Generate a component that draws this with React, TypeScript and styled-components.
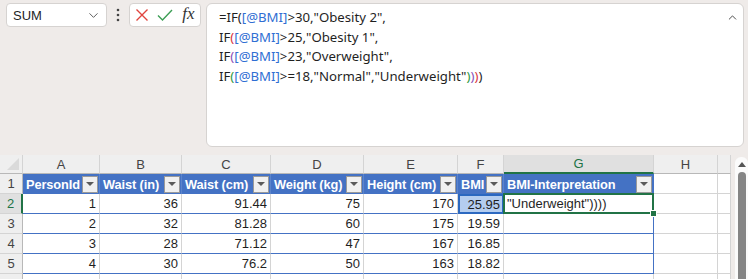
import { Fragment } from "react";
import styled, { createGlobalStyle } from "styled-components";
import { ChevronDown, ChevronUp } from "lucide-react";

const GlobalStyle = createGlobalStyle`
  body {
    margin: 0;
    background-color: #efebe9;
    font-family: "Liberation Sans", Arial, sans-serif;
    overflow: hidden;
  }
`;

const Page = styled.div`
  width: 748px;
  height: 279px;
  overflow: hidden;
`;

const Top = styled.div`
  display: flex;
  align-items: flex-start;
  padding: 3px 4px 0 6px;
  height: 152px;
`;

const NameBox = styled.div`
  box-sizing: border-box;
  width: 101px;
  height: 24px;
  display: flex;
  align-items: center;
  justify-content: space-between;
  padding: 0 5px 0 6px;
  background-color: #ffffff;
  border: 1px solid #d6d3d1;
  border-radius: 4px;
  font-size: 13px;
  color: #1f1f1f;
  & svg {
    color: #555555;
  }
`;

const Dots = styled.div`
  width: 22px;
  height: 24px;
  display: flex;
  align-items: center;
  justify-content: center;
`;

const ButtonBox = styled.div`
  box-sizing: border-box;
  width: 72px;
  height: 24px;
  display: flex;
  background-color: #ffffff;
  border: 1px solid #d6d3d1;
  border-radius: 4px;
`;

const IconSlot = styled.div`
  flex: 1;
  display: flex;
  align-items: center;
  justify-content: center;
`;

const Fx = styled.span`
  font-family: "Liberation Serif", "Times New Roman", serif;
  font-style: italic;
  font-size: 17px;
  color: #333333;
  margin-top: -2px;
`;

const FormulaBar = styled.div`
  box-sizing: border-box;
  flex: 1;
  height: 144px;
  margin-left: 5px;
  display: flex;
  align-items: flex-start;
  padding: 4px 4px 0 12px;
  background-color: #ffffff;
  border: 1px solid #d6d3d1;
  border-radius: 6px;
  & svg {
    color: #333333;
    margin-top: 3px;
  }
`;

const FormulaText = styled.div`
  flex: 1;
  font-family: "Noto Sans", "Liberation Sans", sans-serif;
  font-size: 13.2px;
  line-height: 19.7px;
  color: #1f1f1f;
  white-space: pre;
`;

const Tok = styled.span<{ $c?: string }>`
  color: ${(p) => p.$c || "inherit"};
`;

const Sheet = styled.div`
  display: flex;
  height: 124px;
`;

const Grid = styled.div`
  width: 731px;
  display: grid;
  grid-template-columns: 23px 77px 82px 89px 93px 94px 46px 150px 64px 13px;
  grid-template-rows: 19px repeat(6, 20px);
  overflow: hidden;
  font-size: 13px;
  background-color: #ffffff;
`;

const Corner = styled.div`
  box-sizing: border-box;
  position: relative;
  background-color: #efefef;
  border-right: 1px solid #d4d4d4;
  border-bottom: 1px solid #b8b8b8;
  &::after {
    content: "";
    position: absolute;
    right: 3px;
    bottom: 3px;
    border-left: 12px solid transparent;
    border-bottom: 12px solid #dadada;
  }
`;

const ColHead = styled.div<{ $active?: boolean }>`
  box-sizing: border-box;
  display: flex;
  align-items: center;
  justify-content: center;
  background-color: ${(p) => (p.$active ? "#e0e0e0" : "#efefef")};
  color: ${(p) => (p.$active ? "#217346" : "#444444")};
  border-right: 1px solid #d4d4d4;
  border-bottom: ${(p) => (p.$active ? "2px solid #217346" : "1px solid #b8b8b8")};
`;

const RowHead = styled.div<{ $active?: boolean }>`
  box-sizing: border-box;
  display: flex;
  align-items: center;
  justify-content: center;
  background-color: ${(p) => (p.$active ? "#e0e0e0" : "#efefef")};
  color: ${(p) => (p.$active ? "#217346" : "#444444")};
  border-right: ${(p) => (p.$active ? "2px solid #217346" : "1px solid #b8b8b8")};
  border-bottom: 1px solid #d4d4d4;
`;

const TableHead = styled.div<{ $last?: boolean }>`
  box-sizing: border-box;
  display: flex;
  align-items: center;
  justify-content: space-between;
  gap: 2px;
  padding-left: 3px;
  background-color: #4472c4;
  color: #ffffff;
  font-weight: bold;
  font-size: 12.8px;
  letter-spacing: -0.1px;
  white-space: nowrap;
  overflow: hidden;
  border-right: 1px solid ${(p) => (p.$last ? "#4472c4" : "#5b84cc")};
`;

const FilterButton = styled.div`
  box-sizing: border-box;
  flex: none;
  width: 16px;
  height: 17px;
  margin-right: 1px;
  display: flex;
  align-items: center;
  justify-content: center;
  background-color: #f0f0f0;
  border: 1px solid #9a9a9a;
  &::after {
    content: "";
    border-left: 4px solid transparent;
    border-right: 4px solid transparent;
    border-top: 4px solid #5a5a5a;
  }
`;

const Cell = styled.div<{ $table?: boolean; $last?: boolean; $left?: boolean }>`
  box-sizing: border-box;
  display: flex;
  align-items: center;
  justify-content: ${(p) => (p.$left ? "flex-start" : "flex-end")};
  padding: 0 3px;
  color: #1f1f1f;
  white-space: nowrap;
  border-right: 1px solid ${(p) => (p.$last ? "#4472c4" : "#d4d4d4")};
  border-bottom: 1px solid ${(p) => (p.$table ? "#4472c4" : "#d4d4d4")};
`;

const RefCell = styled(Cell)`
  background-color: #b4cdef;
  border: 2px solid #2b68c0;
  padding-right: 2px;
`;

const ActiveCell = styled(Cell)`
  position: relative;
  overflow: visible;
  &::before {
    content: "";
    position: absolute;
    left: -1px;
    top: -1px;
    right: -1px;
    bottom: -1px;
    border: 2px solid #217346;
    pointer-events: none;
  }
  &::after {
    content: "";
    position: absolute;
    right: -4px;
    bottom: -4px;
    width: 5px;
    height: 5px;
    background-color: #217346;
    border: 1px solid #ffffff;
    z-index: 2;
  }
`;

const Scrollbar = styled.div`
  box-sizing: border-box;
  width: 13px;
  margin-left: 4px;
  margin-top: 2px;
  display: flex;
  flex-direction: column;
  align-items: center;
  background-color: #fbfbfb;
  border-radius: 6px 6px 0 0;
  padding-top: 5px;
`;

const ScrollArrow = styled.div`
  border-left: 4px solid transparent;
  border-right: 4px solid transparent;
  border-bottom: 5px solid #555555;
`;

const Thumb = styled.div`
  width: 8px;
  flex: 1;
  margin-top: 5px;
  background-color: #858585;
  border-radius: 4px 4px 0 0;
`;

const columns = ["A", "B", "C", "D", "E", "F", "G", "H", ""];
const headers = ["PersonId", "Waist (in)", "Waist (cm)", "Weight (kg)", "Height (cm)", "BMI", "BMI-Interpretation"];
const rows = [
  ["1", "36", "91.44", "75", "170", "25.95"],
  ["2", "32", "81.28", "60", "175", "19.59"],
  ["3", "28", "71.12", "47", "167", "16.85"],
  ["4", "30", "76.2", "50", "163", "18.82"],
];

const REF = "#2f6ed3";
const RED = "#d9353f";
const PURPLE = "#8b4fb8";
const GREEN = "#2f9a45";

const App = () => {
  return (
    <Page>
      <GlobalStyle />
      <Top>
        <NameBox>
          <span>SUM</span>
          <ChevronDown size={15} strokeWidth={1.5} />
        </NameBox>
        <Dots>
          <svg width="4" height="14" viewBox="0 0 4 14">
            <circle cx="2" cy="2" r="1.3" fill="#444" />
            <circle cx="2" cy="7" r="1.3" fill="#444" />
            <circle cx="2" cy="12" r="1.3" fill="#444" />
          </svg>
        </Dots>
        <ButtonBox>
          <IconSlot>
            <svg width="14" height="14" viewBox="0 0 14 14">
              <path d="M1.5 1.5 L12.5 12.5 M12.5 1.5 L1.5 12.5" stroke="#e0443e" strokeWidth="1.4" fill="none" />
            </svg>
          </IconSlot>
          <IconSlot>
            <svg width="16" height="14" viewBox="0 0 16 14">
              <path d="M1 7.5 L5.5 12 L15 2" stroke="#3c9e55" strokeWidth="1.4" fill="none" />
            </svg>
          </IconSlot>
          <IconSlot>
            <Fx>fx</Fx>
          </IconSlot>
        </ButtonBox>
        <FormulaBar>
          <FormulaText>
            =IF(<Tok $c={REF}>[@BMI]</Tok>&gt;30,"Obesity 2",{"\n"}
            IF<Tok $c={RED}>(</Tok><Tok $c={REF}>[@BMI]</Tok>&gt;25,"Obesity 1",{"\n"}
            IF<Tok $c={PURPLE}>(</Tok><Tok $c={REF}>[@BMI]</Tok>&gt;23,"Overweight",{"\n"}
            IF<Tok $c={GREEN}>(</Tok><Tok $c={REF}>[@BMI]</Tok>&gt;=18,"Normal","Underweight"
            <Tok $c={GREEN}>)</Tok>
            <Tok $c={PURPLE}>)</Tok>
            <Tok $c={RED}>)</Tok>)
          </FormulaText>
          <ChevronUp size={13} strokeWidth={1.6} />
        </FormulaBar>
      </Top>
      <Sheet>
        <Grid>
          <Corner />
          {columns.map((c, i) => (
            <ColHead key={i} $active={c === "G"}>
              {c}
            </ColHead>
          ))}

          <RowHead>1</RowHead>
          {headers.map((h, i) => (
            <TableHead key={h} $last={i === headers.length - 1}>
              <span>{h}</span>
              <FilterButton />
            </TableHead>
          ))}
          <Cell />
          <Cell />

          {rows.map((r, ri) => (
            <Fragment key={ri}>
              <RowHead $active={ri === 0}>{ri + 2}</RowHead>
              {r.map((v, ci) =>
                ri === 0 && ci === 5 ? (
                  <RefCell key={ci} $table>
                    {v}
                  </RefCell>
                ) : (
                  <Cell key={ci} $table>
                    {v}
                  </Cell>
                )
              )}
              {ri === 0 ? (
                <ActiveCell $table $last $left>
                  "Underweight"))))
                </ActiveCell>
              ) : (
                <Cell $table $last />
              )}
              <Cell />
              <Cell />
            </Fragment>
          ))}

          <RowHead />
          {columns.map((_, i) => (
            <Cell key={`e${i}`} />
          ))}
        </Grid>
        <Scrollbar>
          <ScrollArrow />
          <Thumb />
        </Scrollbar>
      </Sheet>
    </Page>
  );
};

export default App;
